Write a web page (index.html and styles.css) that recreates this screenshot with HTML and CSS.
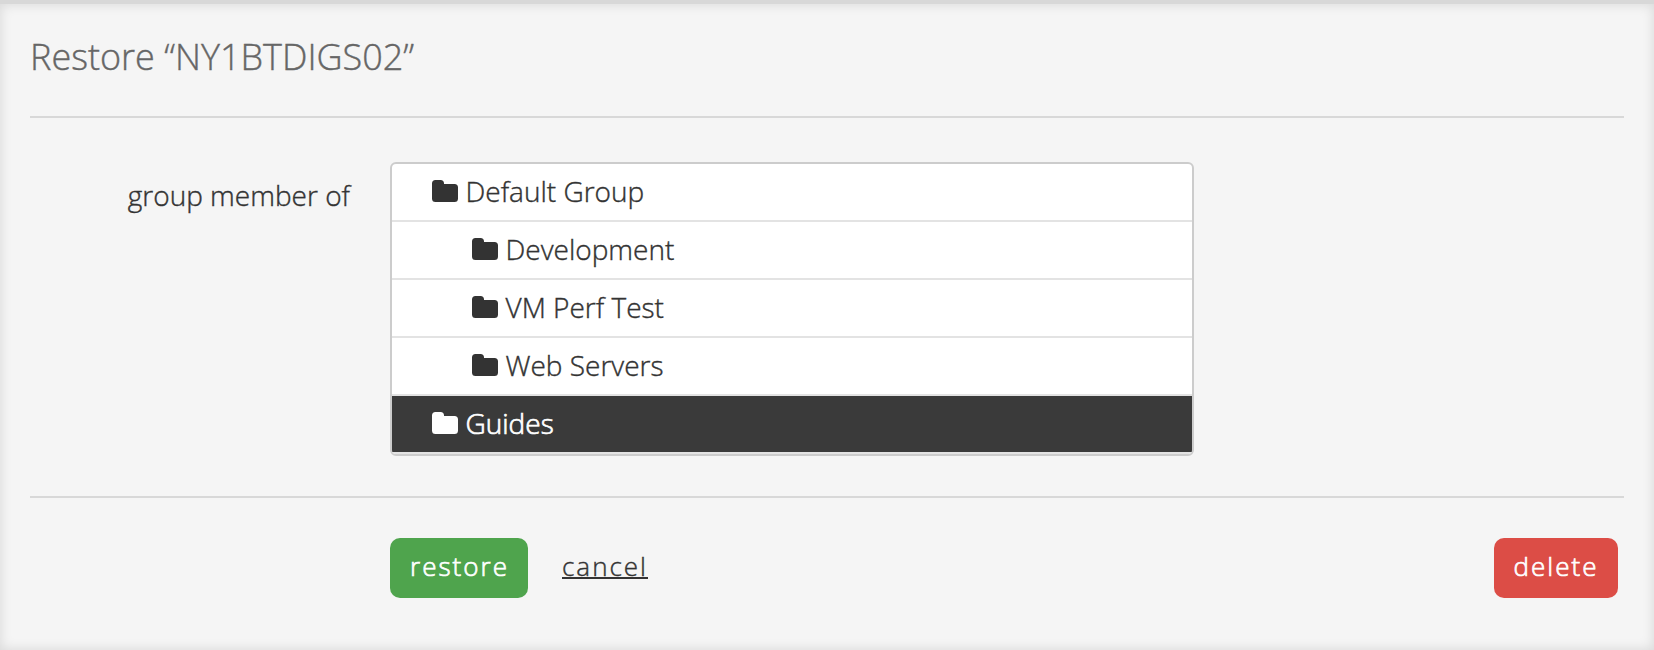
FILE: index.html
```html
<!DOCTYPE html>
<html lang="en">
<head>
<meta charset="utf-8">
<title>Restore</title>
<link rel="stylesheet" href="styles.css">
</head>
<body>
<svg class="defs" width="0" height="0" aria-hidden="true">
  <symbol id="folder" viewBox="0 0 26 22">
    <path d="M3.500 0H8.500Q12 0 12 3.500V4H22.500Q26 4 26 7.500V18.500Q26 22 22.500 22H3.500Q0 22 0 18.500V3.500Q0 0 3.500 0Z" fill="currentColor"/>
  </symbol>
</svg>
<main class="panel">
  <h1 class="title">Restore “NY1BTDIGS02”</h1>
  <section class="field">
    <div class="label">group member of</div>
    <ul class="tree">
      <li class="item"><svg class="icon"><use href="#folder"/></svg><span>Default Group</span></li>
      <li class="item child"><svg class="icon"><use href="#folder"/></svg><span>Development</span></li>
      <li class="item child"><svg class="icon"><use href="#folder"/></svg><span>VM Perf Test</span></li>
      <li class="item child"><svg class="icon"><use href="#folder"/></svg><span>Web Servers</span></li>
      <li class="item selected"><svg class="icon"><use href="#folder"/></svg><span>Guides</span></li>
    </ul>
  </section>
  <footer class="actions">
    <button class="button restore">restore</button>
    <a class="cancel">cancel</a>
    <button class="button delete">delete</button>
  </footer>
</main>
</body>
</html>
```
FILE: styles.css
```css
* { box-sizing: border-box; }
body {
  margin: 0;
  background: #f5f5f5;
  font-family: "Open Sans", sans-serif;
  font-weight: 300;
  color: #333;
  -webkit-text-stroke: .4px currentColor;
}
.defs { display: block; height: 0; }
.panel {
  height: 650px;
  padding: 0 30px;
  border-top: 4px solid #d8d8d8;
  background: #f5f5f5;
  box-shadow: inset 0 0 12px 1px rgba(0, 0, 0, .11);
}
.title {
  height: 114px;
  margin: 0;
  padding-top: 28px;
  border-bottom: 2px solid #d8d8d8;
  font-size: 36px;
  line-height: 50px;
  font-weight: 300;
  color: #666;
}
.field {
  display: flex;
  height: 380px;
  padding-top: 44px;
  border-bottom: 2px solid #d8d8d8;
}
.label { width: 360px; padding: 13px 40px 0 0; text-align: right; font-size: 28px; line-height: 40px; }
.tree {
  width: 804px;
  height: 294px;
  margin: 0;
  padding: 0;
  overflow: hidden;
  list-style: none;
  background: #fff;
  border: 2px solid #ccc;
  border-radius: 6px;
}
.item {
  display: flex;
  align-items: center;
  gap: 7.5px;
  height: 58px;
  padding: 0 0 2px 40px;
  border-bottom: 2px solid #e3e3e3;
  font-size: 28px;
  line-height: 54px;
}
.child { padding-left: 80px; }
.selected { background: #3a3a3a; background-clip: padding-box; color: #fff; -webkit-text-stroke-width: .7px; }
.icon { width: 26px; height: 22px; flex: none; }
.actions { display: flex; align-items: center; padding: 40px 6px 0 360px; }
.button {
  height: 60px;
  padding: 0 0 4px;
  border: 0;
  border-radius: 10px;
  color: #fff;
  font: 300 26px/56px "Open Sans", sans-serif;
  letter-spacing: 2px;
  -webkit-text-stroke: .7px currentColor;
}
.restore { width: 138px; padding-left: 1px; background: #4fa44d; }
.delete { width: 124px; margin-left: auto; background: #dc4d46; }
.cancel {
  margin-left: 34px;
  padding-bottom: 4px;
  font-size: 26px;
  line-height: 36px;
  letter-spacing: 2px;
  text-decoration: underline;
  text-decoration-thickness: 2px;
  text-decoration-skip-ink: none;
}
```
